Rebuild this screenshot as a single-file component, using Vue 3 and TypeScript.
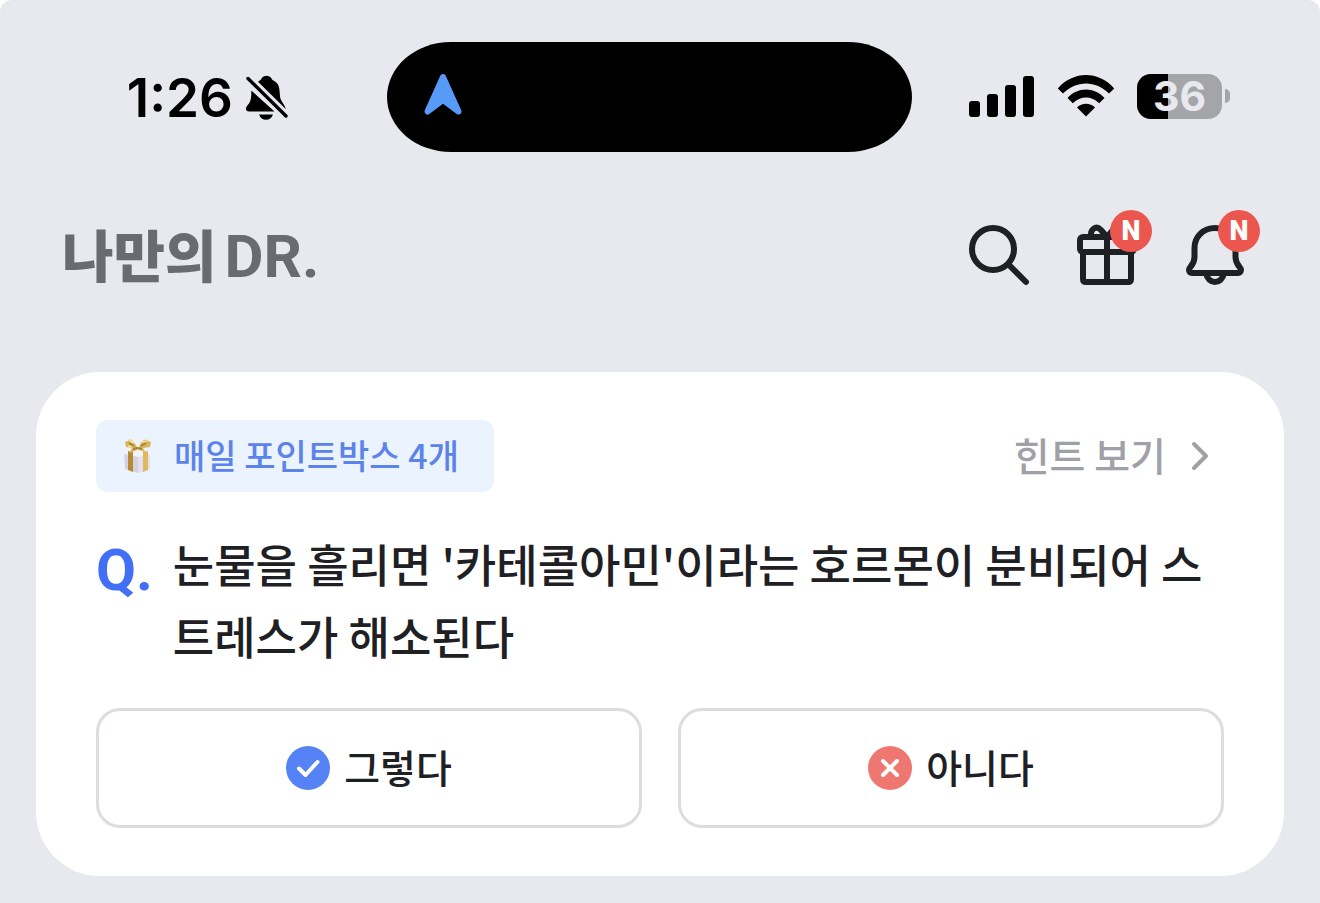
<script setup lang="ts">
import { ref } from 'vue'

type Answer = 'yes' | 'no'

const battery = 36
const points = 4
const question = "눈물을 흘리면 '카테콜아민'이라는 호르몬이 분비되어 스트레스가 해소된다"
const selected = ref<Answer | null>(null)
</script>

<template>
  <div class="page">
    <div class="status">
      <div class="clock">
        <time>1:26</time>
        <svg width="44" height="46" viewBox="0 0 44 46" aria-hidden="true">
          <path d="M12 7.500C14.500 5.500 16 5 16.500 3.500C18.500-.2 24.500-.2 26.500 3.500C27 5 28.500 5.500 30 6.500C34.500 9.500 34.500 14 35 21C35.300 26.500 39.500 28.500 40.500 33.500Q40.800 34.800 40 35.500Z" />
          <path d="M6.300 15.500L29.500 36.500H4C1 36.500 0 33.500 2 31C5 27.500 6.500 25.500 6.300 15.500Z" />
          <path d="M14 39.500H28C26 46.500 16 46.500 14 39.500Z" />
          <path d="M3 3.500L41 41" fill="none" stroke="#000" stroke-width="3.400" stroke-linecap="round" />
          <path d="M6.300 1.500L43 37.700" fill="none" stroke="#e8e9ee" stroke-width="2" />
        </svg>
      </div>
      <div class="island">
        <svg width="40" height="44" viewBox="0 0 40 44" aria-hidden="true">
          <path d="M20 4L35.500 38.500L20 27L4.500 38.500Z" fill="#579af7" stroke="#579af7" stroke-width="6" stroke-linejoin="round" />
          <path d="M20 31L4 45H36Z" fill="#000" />
        </svg>
      </div>
      <div class="signals">
        <svg width="66" height="42" viewBox="0 0 66 42" aria-hidden="true">
          <rect y="26" width="11" height="16" rx="3" />
          <rect x="18" y="19" width="11" height="23" rx="3" />
          <rect x="36" y="10" width="11" height="32" rx="3" />
          <rect x="54" y="1" width="11" height="41" rx="3" />
        </svg>
        <svg width="58" height="42" viewBox="0 0 58 42" aria-hidden="true">
          <path d="M.8 13.500C16-4.500 42-4.500 57.200 13.500L52 18.500C39 5 19 5 6 18.500Z" />
          <path d="M10.500 23C20.500 11.500 37.500 11.500 47.500 23L42.200 28.300C34.500 20.500 23.500 20.500 15.800 28.300Z" />
          <path d="M20 32.500C25 27.500 33 27.500 38 32.500L29 41.500Z" />
        </svg>
        <div class="battery">
          <div class="cell">
            <div class="level" :style="{ width: battery + '%' }"></div>
            <span>{{ battery }}</span>
          </div>
          <div class="tip"></div>
        </div>
      </div>
    </div>

    <header class="header">
      <h1 class="logo"><span>나만의</span><span class="mark">DR.</span></h1>
      <nav class="tools">
        <button type="button" aria-label="검색">
          <svg width="72" height="72" viewBox="0 0 72 72" fill="none" stroke="#1e2024" stroke-width="6" stroke-linecap="round">
            <circle cx="30" cy="30" r="21" /><path d="M45.500 45.500L63 63" />
          </svg>
        </button>
        <button type="button" aria-label="선물">
          <svg width="72" height="72" viewBox="0 0 72 72" fill="none" stroke="#1e2024" stroke-width="6" stroke-linejoin="round">
            <rect x="9" y="18" width="54" height="15" rx="3" />
            <path d="M12 33V60Q12 63 15 63H57Q60 63 60 60V33M36 18V63" />
            <path d="M20 18C19 10 25 6 30 11L36 18L42 11C47 6 53 10 52 18" />
          </svg>
          <span class="badge">N</span>
        </button>
        <button type="button" aria-label="알림">
          <svg width="72" height="72" viewBox="0 0 72 72" fill="none" stroke="#1e2024" stroke-width="6" stroke-linejoin="round">
            <path d="M36 9C24 9 15.500 18 15.500 29V38C15.500 43 14 45 11.500 48C9 51 10 54 13.500 54H58.500C62 54 63 51 60.500 48C58 45 56.500 43 56.500 38V29C56.500 18 48 9 36 9Z" />
            <path d="M27 54C29 66 43 66 45 54" />
          </svg>
          <span class="badge">N</span>
        </button>
      </nav>
    </header>

    <main class="card">
      <div class="top">
        <div class="pill">
          <svg width="36" height="36" viewBox="0 0 36 36" aria-hidden="true">
            <path d="M4 14L18 17V35L5 31Z" fill="#d3d2e2" />
            <path d="M18 17L30 14V31L18 35Z" fill="#e3e1ee" />
            <path d="M4 13L18 11L31 13V16L18 19L4 16Z" fill="#f4f3f9" />
            <path d="M8 13L13 14V34L8 32Z" fill="#b68a37" />
            <path d="M23 14L28 13V32L23 34Z" fill="#dfb95f" />
            <path d="M17 9C13 1 9 0 8 3L5 4L6 9L12 10L9 15L15 13L18 11L22 13L26 15L23 10L30 9L31 4L28 3C26 0 21 2 19 9Z" fill="#d9b65b" />
            <path d="M9 5L14 8M21 8L26 5M13 11L17 10L22 11" fill="none" stroke="#a98234" stroke-width="2" />
            <path d="M9 2L14 5M22 4L27 3M8 8L12 9" fill="none" stroke="#f6e1a1" stroke-width="1.500" />
          </svg>
          <span>매일 포인트박스 {{ points }}개</span>
        </div>
        <a class="hint" href="#hint">
          <span>힌트 보기</span>
          <svg width="48" height="48" viewBox="0 0 48 48" fill="none" stroke="#a0a1a7" stroke-width="4" stroke-linecap="round" stroke-linejoin="round" aria-hidden="true">
            <path d="M18 12L30 24L18 36" />
          </svg>
        </a>
      </div>
      <div class="question">
        <span class="q">Q.</span>
        <p>{{ question }}</p>
      </div>
      <div class="answers">
        <button type="button" :aria-pressed="selected === 'yes'" @click="selected = 'yes'">
          <svg width="44" height="44" viewBox="0 0 44 44" aria-hidden="true">
            <circle cx="22" cy="22" r="22" fill="#5583f5" />
            <path d="M13 22.500L19.500 29L31.500 16" fill="none" stroke="#fff" stroke-width="4" stroke-linecap="round" stroke-linejoin="round" />
          </svg>
          <span>그렇다</span>
        </button>
        <button type="button" :aria-pressed="selected === 'no'" @click="selected = 'no'">
          <svg width="44" height="44" viewBox="0 0 44 44" aria-hidden="true">
            <circle cx="22" cy="22" r="22" fill="#ee7772" />
            <path d="M15 15L29 29M29 15L15 29" fill="none" stroke="#fff" stroke-width="4" stroke-linecap="round" />
          </svg>
          <span>아니다</span>
        </button>
      </div>
    </main>
  </div>
</template>

<style>
body {
  background: #fff;
}
</style>

<style scoped>
* {
  box-sizing: border-box;
}
.page {
  min-height: 100vh;
  padding: 42px 36px 26px;
  border-radius: 12px 12px 0 0;
  background: #e8e9ee;
  color: #1e2024;
  font-family: "Noto Sans CJK KR", sans-serif;
}
svg {
  display: block;
  flex: none;
}
button {
  padding: 0;
  border: 0;
  background: none;
  color: inherit;
  font: inherit;
  cursor: pointer;
}
.status {
  display: grid;
  grid-template-columns: 351fr 525fr 372fr;
  height: 110px;
  color: #000;
  font-family: Inter, sans-serif;
}
.clock {
  display: flex;
  align-items: center;
  justify-content: flex-end;
  gap: 12px;
  padding: 2px 98px 0 0;
  font-size: 53px;
  font-weight: 600;
  line-height: 1;
}
.island {
  display: flex;
  align-items: center;
  padding: 0 36px 4px;
  border-radius: 64px / 55px;
  background: #000;
}
.signals {
  display: flex;
  align-items: center;
  justify-content: flex-end;
  gap: 22px;
  padding: 0 54px 2px 0;
}
.battery {
  display: flex;
  align-items: center;
  gap: 3px;
}
.cell {
  display: grid;
  width: 85px;
  height: 45px;
  border-radius: 14px;
  background: #a4a5a8;
}
.level,
.cell span {
  grid-area: 1 / 1;
}
.level {
  border-radius: 14px 0 0 14px;
  background: #000;
}
.cell span {
  color: #e8e9ee;
  font-size: 41px;
  font-weight: 700;
  line-height: 45px;
  text-align: center;
}
.tip {
  width: 5px;
  height: 14px;
  border-radius: 0 7px 7px 0;
  background: #a4a5a8;
}
.header {
  display: flex;
  align-items: center;
  justify-content: space-between;
  padding: 67px 33px 81px 26px;
}
.logo {
  display: flex;
  align-items: center;
  gap: 8px;
  margin: 0;
  padding-bottom: 4px;
  color: #6a6b72;
  font-size: 56px;
  font-weight: 900;
  line-height: 68px;
}
.mark {
  padding-top: 8px;
  font-family: Roboto, sans-serif;
  font-size: 60px;
  font-weight: 700;
  line-height: 60px;
}
.tools {
  display: flex;
  gap: 36px;
}
.tools button {
  position: relative;
}
.badge {
  position: absolute;
  top: -9px;
  left: 39px;
  width: 42px;
  height: 42px;
  border-radius: 50%;
  background: #eb574f;
  color: #fff;
  font-family: Roboto, sans-serif;
  font-size: 27px;
  font-weight: 900;
  line-height: 42px;
  text-align: center;
}
.card {
  display: flex;
  flex-direction: column;
  gap: 36px;
  padding: 48px 60px;
  border-radius: 64px;
  background: #fff;
}
.top {
  display: flex;
  align-items: center;
  justify-content: space-between;
}
.pill {
  display: flex;
  align-items: center;
  gap: 18px;
  height: 72px;
  padding: 0 35px 0 24px;
  border-radius: 12px;
  background: #eaf3fe;
  color: #5b83ea;
  font-size: 34px;
  font-weight: 500;
}
.pill span,
.hint span,
.answers span {
  padding-bottom: 4px;
}
.hint {
  display: flex;
  align-items: center;
  gap: 10px;
  color: #a0a1a7;
  font-size: 39px;
  font-weight: 500;
  line-height: 68px;
  text-decoration: none;
}
.question {
  display: flex;
  gap: 20px;
  font-size: 45px;
  font-weight: 500;
  line-height: 72px;
}
.question p {
  margin: 0;
  word-break: break-all;
}
.q {
  padding-top: 6px;
  color: #416ff5;
  font-family: Roboto, sans-serif;
  font-size: 58px;
  font-weight: 700;
}
.answers {
  display: grid;
  grid-template-columns: 1fr 1fr;
  gap: 36px;
}
.answers button {
  display: flex;
  align-items: center;
  justify-content: center;
  gap: 14px;
  height: 120px;
  border: 3px solid #dcdde0;
  border-radius: 24px;
  font-size: 39px;
  font-weight: 500;
}
</style>
